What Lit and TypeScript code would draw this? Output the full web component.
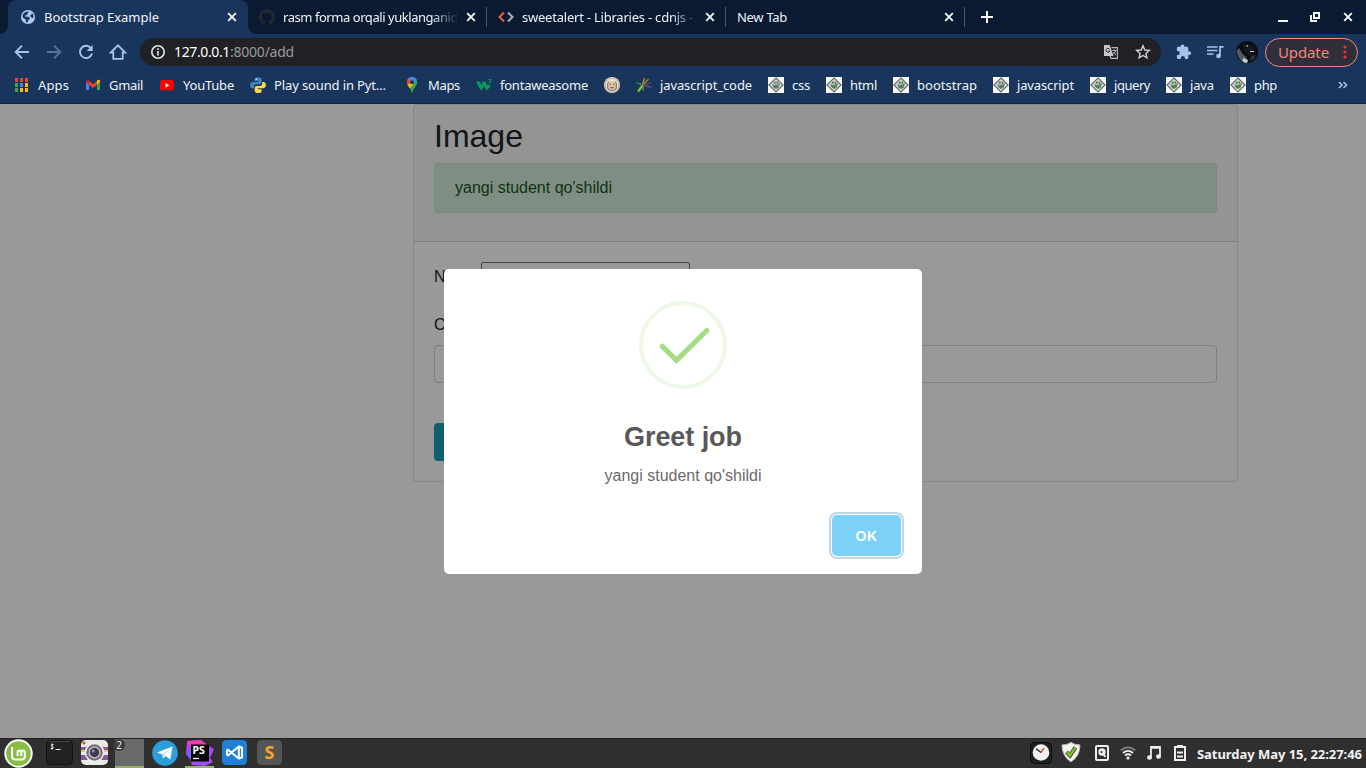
import { LitElement, html, css, svg, nothing } from "lit";
import { customElement, property } from "lit/decorators.js";

/** A single-line label whose tracking is tuned so it fills a given width. */
@customElement("fit-text")
class FitText extends LitElement {
  @property({ type: Number }) width = 0;
  @property() text = "";
  static styles = css`
    :host { display: inline-block; white-space: pre; flex: none; }
  `;
  render() {
    return html`<span>${this.text}</span>`;
  }
  updated() {
    const span = this.renderRoot.querySelector("span") as HTMLElement;
    span.style.letterSpacing = "0px";
    const natural = span.getBoundingClientRect().width;
    span.style.letterSpacing = (this.width - natural) / this.text.length + "px";
    this.style.width = this.width + "px";
  }
}

const fit = (text: string, width: number, cls = "") =>
  html`<fit-text class=${cls} .text=${text} .width=${width}></fit-text>`;

const ico = (body: unknown, w = 16, h = 16, box = `0 0 ${w} ${h}`) =>
  html`<svg class="ico" width=${w} height=${h} viewBox=${box} fill="none">${body}</svg>`;

const globe = svg`<circle cx="8" cy="8" r="7.100" fill="#b3c8ea"/><path d="M2.600 6.500C3 4.500 5 2.600 8 2.500L8.800 3.300L7.500 4.500V5.800L5.500 6.300L5.300 7.700H8.500L9.800 9L9.700 10.300L8 11.300L7.800 13.600L6 13.300L5.700 10.600L2.500 8.300ZM11.800 3.800Q13.700 5.500 13.700 8.300L12.500 9L11 8.200L10 6.500L11.800 5.300Z" fill="#1a355c"/>`;
const github = svg`<path fill="#24292e" d="M8 0C3.580 0 0 3.580 0 8c0 3.540 2.290 6.530 5.470 7.590.4.070.550-.170.550-.380v-1.490c-2.010.370-2.530-.490-2.690-.940-.090-.230-.480-.940-.820-1.130-.280-.150-.680-.520-.010-.530.630-.010 1.080.580 1.230.820.720 1.210 1.870.870 2.330.660.070-.520.280-.870.510-1.070-1.780-.2-3.640-.890-3.640-3.950 0-.870.310-1.590.820-2.150-.080-.2-.360-1.020.080-2.120 0 0 .670-.210 2.200.820a7.600 7.600 0 0 1 4 0c1.530-1.040 2.200-.820 2.200-.820.440 1.100.160 1.920.080 2.120.510.560.820 1.270.820 2.150 0 3.070-1.870 3.750-3.650 3.950.290.250.540.730.540 1.480v2.200c0 .210.150.460.550.380A8 8 0 0 0 8 0Z"/>`;
const codeIcon = svg`<path d="M6 3.500L1.500 8L6 12.500" stroke="#e8633c" stroke-width="2"/><path d="M10 3.500L14.500 8L10 12.500" stroke="#a9b0ba" stroke-width="2"/>`;
const closeX = (s = 10) =>
  ico(svg`<path d="M1.200 1.200L8.800 8.800M8.800 1.200L1.200 8.800" stroke="#f4f7fb" stroke-width="1.900"/>`, s, s, "0 0 10 10");

const apps = svg`${[0, 1, 2].map((r) =>
  [0, 1, 2].map(
    (c) => svg`<rect x=${1 + c * 5} y=${1 + r * 5} width="3" height="4" fill=${
      [["#f04338", "#f04338", "#f04338"], ["#34a853", "#4285f4", "#fbbc04"], ["#34a853", "#fbbc04", "#fbbc04"]][r][c]
    }/>`
  )
)}`;
const gmail = svg`<path d="M1 4.500V13H4V7Z" fill="#4285f4"/><path d="M15 4.500V13H12V7Z" fill="#34a853"/><path d="M4 4L8 7.200L12 4V7.800L8 11L4 7.800Z" fill="#ea4335"/><path d="M1 5V4C1 2.500 2.700 2.300 4 3.500V7.600L1 5.300Z" fill="#c5221f"/><path d="M15 5V4C15 2.500 13.300 2.300 12 3.500V7.600L15 5.300Z" fill="#fbbc04"/>`;
const youtube = svg`<rect x="1" y="3" width="14" height="10.500" rx="2.300" fill="#f00"/><path d="M6.500 5.900L10.300 8.200L6.500 10.500Z" fill="#fff"/>`;
const python = svg`<path d="M8 .2C5 .2 4.600 1.300 4.600 2.300V4H8.400V5H2.900C1.400 5 .2 6.200.2 8.200S1.400 11.300 2.700 11.300H4V9.300C4 8 5 7.200 6.200 7.200H9.500C10.600 7.200 11.500 6.400 11.500 5.300V2.500C11.500 1 10.200.2 8 .2Z" fill="#3f86bd"/><path d="M8.200 16C11.200 16 11.600 14.900 11.600 13.900V12.200H7.800V11.200H13.200C14.700 11.200 15.900 10 15.900 8S14.700 4.900 13.500 4.900H12.200V7C12.200 8.300 11.200 9 10 9H6.800C5.700 9 4.700 9.700 4.700 10.900V13.700C4.700 15.200 6 16 8.200 16Z" fill="#ffd848"/><circle cx="6.300" cy="2.300" r=".7" fill="#fff"/>`;
const maps = svg`<path d="M8 0C4.900 0 2.800 2.400 2.800 5.200C2.800 9 6.800 10.500 7.500 15.300Q8 16.600 8.500 15.300C9.200 10.500 13.200 9 13.200 5.200C13.200 2.400 11.100 0 8 0Z" fill="#34a853"/><path d="M4 1.500C5 .5 6.300 0 8 0C10.300 0 12 1.300 12.700 2.900L8 8L4 5Z" fill="#4285f4"/><path d="M4.100 1.700C2.400 3.500 2.600 6.500 3.700 8L8 4.500Z" fill="#ea4335"/><path d="M3.600 8L8.500 4L9.600 7L6 11.300Q4.300 9.300 3.600 8Z" fill="#fbbc04"/><circle cx="8" cy="5.200" r="2" fill="#1d355b"/>`;
const w3 = svg`<path d="M0 4.500H4L5.300 8.300L6.800 4.500H9.300L11 8.500L12 7L14.500 9.300L10.800 13.700L8 9L5.500 14L3 10.500Z" fill="#059862"/><path d="M12.500 2.500H15L13.800 4L15 4.800L14.300 6L12.600 5.800" stroke="#059862"/>`;
const face = svg`<circle cx="8" cy="8" r="8" fill="#ecdcc9"/><circle cx="8" cy="8" r="6.900" stroke="#c9a98b" stroke-width=".9"/><path d="M3 8C3 1.800 13 1.800 13 8V11C11 15 5 15 3 11Z" fill="#6688a8"/><path d="M4.300 7C4.500 2.200 11.500 2.200 11.700 7L11.700 11Q8 15 4.300 11Z" fill="#f0c39e"/><path d="M5.700 7.200H7M9 7.200H10.300M6.300 10.300Q8 11.600 9.700 10.300" stroke="#674332"/><path d="M5.200 4.200Q8 2.300 10.800 4.200" stroke="#fff5e8"/>`;
const burst = svg`<path d="M6.500 8L8.500 1" stroke="#e8801f" stroke-width="1.300"/><path d="M7 8L12.500 2" stroke="#7d9c2a" stroke-width="1.300"/><path d="M7 8L.5 5.700" stroke="#2d8056" stroke-width="1.500"/><path d="M7 8L2 14.500" stroke="#7ec92b" stroke-width="2.200"/><path d="M7 8V13.500" stroke="#57a63a" stroke-width="1.400"/><path d="M7 8L15.500 10.500" stroke="#65499c" stroke-width="1.400"/><path d="M7 8L15 6" stroke="#8b3d62"/>`;
const diamond = svg`<rect width="16" height="16" fill="#f7f7f5"/><path d="M8 1L15 8L8 15L1 8Z" fill="#e3e6e3" stroke="#666966" stroke-width="1.200"/><path d="M8 3.200L12.500 7.500L8 12.700L3.500 7.500Z" fill="#b2bdb5"/><path d="M4.500 7L6.500 8.300L9 7.500L12 5.500L11 10.500L8 12.300L4.800 10Z" fill="#61906f"/><path d="M6.200 5.500H7.300M8.900 5.500H9.900" stroke="#252b28" stroke-width="1.300"/><path d="M6.500 9.800H9.500" stroke="#3f5f4b"/>`;

const bookmarks: [unknown, string, number][] = [
  [apps, "Apps", 31],
  [gmail, "Gmail", 34],
  [youtube, "YouTube", 51],
  [python, "Play sound in Pyt…", 112],
  [maps, "Maps", 32],
  [w3, "fontaweasome", 88],
  [face, "", 0],
  [burst, "javascript_code", 92],
  [diamond, "css", 18],
  [diamond, "html", 27],
  [diamond, "bootstrap", 60],
  [diamond, "javascript", 57],
  [diamond, "jquery", 36],
  [diamond, "java", 24],
  [diamond, "php", 23],
];

@customElement("browser-chrome")
class BrowserChrome extends LitElement {
  static styles = css`
    :host { display: block; height: 104px; background: #1a355c; color: #eef3fa;
      font: 13px/16px "Noto Sans", "Open Sans", sans-serif; box-sizing: border-box; border-bottom: 1px solid #10233f; }
    * { box-sizing: border-box; }
    .ico { display: block; flex: none; overflow: visible; }
    .strip { height: 34px; background: #0b1a33; display: flex; align-items: center; padding: 0 13px 0 8px; }
    .tab { width: 239px; flex: none; height: 34px; display: flex; align-items: center; gap: 8px; padding: 0 11px 0 11px; position: relative; }
    .tab.active { width: 240px; background: #1a355c; border-radius: 8px 8px 0 0; padding-left: 12px; }
    .tab.active::before, .tab.active::after { content: ""; position: absolute; bottom: 0; width: 8px; height: 8px; }
    .tab.active::before { left: -8px; background: radial-gradient(circle at 0 0, #0b1a33 7.5px, #1a355c 8px); }
    .tab.active::after { right: -8px; background: radial-gradient(circle at 100% 0, #0b1a33 7.5px, #1a355c 8px); }
    .tab.line::after { content: ""; position: absolute; right: 0; top: 7px; width: 1px; height: 20px; background: #4a5567; }
    .title { flex: 1; white-space: nowrap; height: 18px; line-height: 18px; }
    .title.fade { -webkit-mask: linear-gradient(90deg, #000 calc(100% - 26px), transparent 100%); }
    .plus { margin-left: 16px; }
    .win { margin-left: auto; display: flex; gap: 22px; align-items: center; }
    .bar { height: 36px; display: flex; align-items: center; padding: 0 0 0 14px; }
    .nav { display: flex; flex: none; gap: 16px; width: 126px; }
    .omni { width: 1021px; flex: none; height: 28px; border-radius: 14px; background: #202124; display: flex; align-items: center;
      padding: 0 10px; font-size: 14px; line-height: 20px; color: #9a9b9d; }
    .host { color: #fff; margin-left: 8px; }
    .right { margin-left: auto; display: flex; gap: 16px; }
    .tools { display: flex; flex: none; align-items: center; gap: 15px; margin-left: 14px; }
    .avatar { margin: 0 -8px 0 -3px; }
    .update { width: 93px; height: 29px; border: 1px solid #f28b82; border-radius: 15px; background: #302e3a; color: #f5857c;
      font-size: 15px; line-height: 20px; display: flex; align-items: center; padding: 0 10px 1px 12px; justify-content: space-between; }
    .marks { height: 30px; display: flex; align-items: center; gap: 16px; padding: 0 18px 0 14px; }
    .mark { display: flex; flex: none; gap: 8px; align-items: center; height: 18px; line-height: 18px; }
    .mark.trim { margin-right: 2px; }
    .more { margin-left: auto; }
  `;
  render() {
    return html`
      <div class="strip">
        <div class="tab active">${ico(globe)}<div class="title">${fit("Bootstrap Example", 115)}</div>${closeX()}</div>
        <div class="tab line">${ico(github)}<div class="title fade">${fit("rasm forma orqali yuklanganid", 175)}</div>${closeX()}</div>
        <div class="tab line">${ico(codeIcon)}<div class="title fade">${fit("sweetalert - Libraries - cdnjs -", 171)}</div>${closeX()}</div>
        <div class="tab line"><div class="title">${fit("New Tab", 50)}</div>${closeX()}</div>
        <div class="plus">${ico(svg`<path d="M6 0V12M0 6H12" stroke="#fff" stroke-width="2"/>`, 12, 12)}</div>
        <div class="win">
          ${ico(svg`<path d="M-1 9H9" stroke="#f4f7fb" stroke-width="2"/>`, 10, 10)}
          ${ico(svg`<path d="M3 1H8V6H3ZM0 3V9H6" stroke="#f4f7fb" stroke-width="2"/>`, 10, 10)}
          ${closeX()}
        </div>
      </div>
      <div class="bar">
        <div class="nav">
          ${ico(svg`<path d="M15 8H2M8 1.700L1.700 8L8 14.300" stroke="#a9c2e9" stroke-width="1.900"/>`)}
          ${ico(svg`<path d="M1 8H14M8 1.700L14.300 8L8 14.300" stroke="#58739d" stroke-width="1.900"/>`)}
          ${ico(svg`<path d="M13.200 4.500A6.100 6.100 0 1 0 14 9.500" stroke="#a9c2e9" stroke-width="1.900"/><path d="M14.700 1V7H8.700Z" fill="#a9c2e9"/>`)}
          ${ico(svg`<path d="M.8 8.500L8 1.300L15.200 8.500H12.700V14.800H3.300V8.500Z" stroke="#a9c2e9" stroke-width="1.800"/>`)}
        </div>
        <div class="omni">
          ${ico(svg`<circle cx="8" cy="8" r="6.200" stroke="#e3e6ea" stroke-width="1.600"/><path d="M8 7V11.500M8 4.300V6" stroke="#e3e6ea" stroke-width="1.600"/>`)}
          ${fit("127.0.0.1", 56, "host")}${fit(":8000/add", 64)}
          <div class="right">
            ${ico(svg`<path d="M1 1H6.700L10.500 12H1Z" fill="#c5c7ca"/><path d="M8.500 3.600H14.400V14.400H8L7 12" stroke="#b8babd" stroke-width="1.100"/><path d="M6.500 5A2 2 0 1 0 6.900 7H5" stroke="#303236"/><path d="M9.300 6.500H13.500M11.300 5.500V6.500M12.800 6.700Q12 9 10 10.500M10.300 8L13 11" stroke="#b8babd"/>`)}
            ${ico(svg`<path d="M8 1.800L9.800 6L14.300 6.400L10.900 9.400L11.900 13.800L8 11.500L4.100 13.800L5.100 9.400L1.700 6.400L6.200 6Z" stroke="#d0d3d7" stroke-width="1.400"/>`)}
          </div>
        </div>
        <div class="tools">
          ${ico(svg`<path d="M14.200 7.200H13.300V4.300C13.300 3.400 12.700 2.800 11.900 2.800H9.400V2.300A1.900 1.900 0 0 0 5.600 2.300V2.800H3.200C2.400 2.800 1.900 3.400 1.900 4.200V6.900H2.800A2 2 0 0 1 2.800 10.900H1.900V13.600C1.900 14.400 2.400 15 3.200 15H5.900V14.100A2 2 0 0 1 9.900 14.100V15H12C12.800 15 13.300 14.400 13.300 13.600V11H14.200A1.900 1.900 0 0 0 14.200 7.200Z" fill="#a9c2e9"/>`)}
          ${ico(svg`<path d="M1 3H11.500M1 6.500H11.500M1 10H7.500" stroke="#a9c2e9" stroke-width="1.600"/><path d="M14 12V2.900H17.500" stroke="#a9c2e9" stroke-width="1.700"/><circle cx="12.500" cy="12" r="2.300" fill="#a9c2e9"/>`, 18, 16)}
          <div class="avatar">${ico(svg`<circle cx="11" cy="11" r="11" fill="#0b0d10"/><path d="M7 3L18 5L20 12L14 15L8 11Z" fill="#15181c"/><path d="M10 4.500L12 4L11.500 6ZM14 10H18V11H14Z" fill="#c2ccd3"/><path d="M.5 10L3 7L6 12L11 17L8 21.500Q2 19 .5 10Z" fill="#4c5a66"/><path d="M7 17L12 19L11 22Q8 22 6.500 20Z" fill="#c8d0d6"/><path d="M15 15L19.500 14L18 18L14 20Z" fill="#2c3740"/>`, 22, 22)}</div>
          <div class="update">${fit("Update", 51)}${ico(svg`<circle cx="2" cy="2" r="1.600" fill="#ee3527"/><circle cx="2" cy="7" r="1.600" fill="#ee3527"/><circle cx="2" cy="12" r="1.600" fill="#ee3527"/>`, 4, 14)}</div>
        </div>
      </div>
      <div class="marks">
        ${bookmarks.map(([i, t, w]) => html`<div class="mark ${i === python ? "trim" : ""}">${ico(i)}${t ? fit(t, w) : nothing}</div>`)}
        <div class="more">${ico(svg`<path d="M1 1L4 4L1 7M5.500 1L8.500 4L5.500 7" stroke="#a9c2e9" stroke-width="1.600"/>`, 10, 8)}</div>
      </div>`;
  }
}

@customElement("student-page")
class StudentPage extends LitElement {
  static styles = css`
    :host { display: block; height: 634px; background: #fff; color: #212529; position: relative; overflow: hidden;
      font: 16px/24px "Liberation Sans", Arial, sans-serif; }
    * { box-sizing: border-box; }
    .card { width: 825px; height: 378px; margin-left: 413px; border: 1px solid rgba(0,0,0,.125); border-radius: 4px; }
    .head { background: rgba(0,0,0,.03); border-bottom: 1px solid rgba(0,0,0,.125); padding: 12px 20px; height: 137px; }
    h2 { font-size: 32px; line-height: 38.400px; font-weight: 500; margin: 0 0 8px; }
    .alert { height: 50px; padding: 12px 20px; border: 1px solid #c3e6cb; border-radius: 4px; background: #d4edda; color: #155724; }
    .body { padding: 20px; }
    .row { display: flex; align-items: center; gap: 4px; height: 30px; }
    .row span { width: 43px; }
    .plain { width: 209px; height: 30px; border: 1px solid #767676; border-radius: 2px; }
    .label { margin-top: 21px; }
    .field { margin-top: 8px; height: 38px; border: 1px solid #ced4da; border-radius: 4px; }
    .send { margin-top: 40px; width: 76px; height: 38px; background: #17a2b8; border-radius: 4px; }
    .shade { position: absolute; inset: 0; background: rgba(0,0,0,.4); }
    .modal { position: absolute; left: 444px; top: 165px; width: 478px; height: 305px; background: #fff; border-radius: 5px;
      display: flex; flex-direction: column; align-items: center; padding: 32px 21px 18px; }
    .tick { display: block; }
    .h { font-size: 27px; line-height: 32px; font-weight: 700; color: #595959; margin-top: 32px; }
    .p { color: #6b6b6b; line-height: 20px; margin-top: 13px; }
    .ok { align-self: flex-end; margin-top: auto; width: 69px; height: 41px; border-radius: 5px; background: #7cd1f9; color: #fff;
      font-size: 14px; font-weight: 700; display: grid; place-items: center; box-shadow: 0 0 0 1px #fff, 0 0 0 3px rgba(43,114,165,.29); }
  `;
  render() {
    return html`
      <div class="card">
        <div class="head"><h2>Image</h2><div class="alert">yangi student qo'shildi</div></div>
        <div class="body">
          <div class="row"><span>Name</span><div class="plain"></div></div>
          <div class="label">Class</div>
          <div class="field"></div>
          <div class="send"></div>
        </div>
      </div>
      <div class="shade"></div>
      <div class="modal">
        <svg class="tick" width="88" height="88" viewBox="0 0 88 88" fill="none">
          <circle cx="44" cy="44" r="42" stroke="#edf8e7" stroke-width="4" />
          <path d="M23.300 45.300L37.500 59.300L67.800 29.500" stroke="#a5dc86" stroke-width="5.200" stroke-linecap="round" />
        </svg>
        ${fit("Greet job", 118, "h")}
        ${fit("yangi student qo'shildi", 157, "p")}
        <div class="ok">${fit("OK", 22)}</div>
      </div>`;
  }
}

@customElement("task-bar")
class TaskBar extends LitElement {
  static styles = css`
    :host { display: flex; height: 30px; box-sizing: border-box; background: #2f2f2f; border-top: 1px solid #222; align-items: center;
      color: #f2f2f2; font: 700 13px/18px "Noto Sans", "Open Sans", sans-serif; padding: 0 4px; }
    .ico { display: block; flex: none; }
    .left { display: flex; }
    .cell { width: 29px; height: 29px; margin-right: 6px; padding-bottom: 2px; display: grid; place-items: center; box-sizing: border-box; position: relative; }
    .cell.menu { margin-right: 12px; padding-bottom: 0; }
    .cell.open { border-bottom: 2px solid #93b470; padding-bottom: 0; }
    .blank { background: #6a6a6a; }
    .badge { position: absolute; left: -2px; top: 0; width: 12px; height: 12px; border-radius: 6px; background: #3c3c3c; font-size: 10px; line-height: 12px; font-weight: 400; text-align: center; }
    .tray { margin-left: auto; display: flex; align-items: center; }
    .slot { width: 26px; display: grid; place-items: center; padding-bottom: 2px; }
    .slot.clock { width: 25px; }
    .slot.shield { width: 35px; }
    .slot.disk { width: 27px; }
    .time { margin-left: 4px; }
  `;
  render() {
    return html`
      <div class="left">
        <div class="cell menu">${ico(svg`<circle cx="14.500" cy="14.500" r="14.200" fill="#fff"/><circle cx="14.500" cy="14.500" r="12.300" fill="#86bd42"/><path d="M8.100 8V17.200Q8.100 20.500 11.400 20.500H17.800Q20.800 20.500 20.800 17.500V13.500Q20.800 11.500 19 11.500T17.200 13.300V17M17.200 13.500Q17.200 11.500 15.400 11.500T13.600 13.300V17" stroke="#fff" stroke-width="2.100"/>`, 29, 29)}</div>
        <div class="cell">${ico(svg`<rect x=".5" y=".5" width="26" height="24" rx="4" fill="#202224" stroke="#111"/><path d="M3 1.500H24" stroke="#484a4b"/><path d="M7.600 4.500H5.700Q4.300 6 6.500 6.500Q8.300 7.200 7 8.600H4.500M6.200 3.300V9.700" stroke="#eee" stroke-width=".9"/><path d="M9.500 9.500H14.500" stroke="#eee"/>`, 27, 25)}</div>
        <div class="cell">${ico(svg`<rect width="27" height="25" rx="5" fill="#ece9e4"/><path d="M0 7H27V10H0ZM0 15H27V20H0Z" fill="#815aa0"/><path d="M0 10H27V12H0Z" fill="#e6c56d"/><circle cx="13.500" cy="12.500" r="9.800" fill="#f2f0ed"/><circle cx="13.500" cy="12.500" r="8.300" fill="#77717d"/><circle cx="13.500" cy="12.500" r="6" fill="#c7c0cf"/><circle cx="13.500" cy="12.500" r="4.700" fill="#45364e"/><circle cx="12.300" cy="11" r="1.500" fill="#a790b6"/><circle cx="3" cy="3" r="1.500" fill="#e34b3d"/>`, 27, 25)}</div>
        <div class="cell blank open"><div class="badge">2</div></div>
        <div class="cell">${ico(svg`<circle cx="13" cy="13" r="12.800" fill="#2a9fda"/><path d="M5 12.500L20.500 6.500L18.300 19.500L13.500 16L11 18.500L10.500 14.500Z" fill="#fff"/><path d="M10.500 14.500L18 8.500L12 15.200L11 18.500Z" fill="#b5d9ef"/>`, 26, 26)}</div>
        <div class="cell open">${ico(svg`<path d="M1 1L15 0L21 5L28 9L24 18L27 22L19 26L6 25L4 18L0 14Z" fill="#a24df5"/><path d="M1 1L15 0L23 6L17 11L4 8Z" fill="#ef3caf"/><path d="M0 14L5 9L7 21L4 19Z" fill="#7c5df5"/><rect x="5" y="4.500" width="18" height="17" fill="#080808"/><path d="M7 18.500H13" stroke="#fff" stroke-width="1.300"/><text x="6.500" y="13.500" font-size="10.500" fill="#fff">PS</text>`, 28, 26)}</div>
        <div class="cell">${ico(svg`<rect width="25" height="25" rx="4.500" fill="#1f80d8"/><path d="M16.800 6.500L20 7.800V17.200L16.800 18.500L6 9.700L5 10.400V14.800L6 15.500Z" stroke="#fff" stroke-width="2.100" stroke-linejoin="round"/><path d="M16.800 6.500V18.500" stroke="#fff" stroke-width="2"/>`, 25, 25)}</div>
        <div class="cell">${ico(svg`<rect width="25" height="25" rx="4.500" fill="#555"/><text x="12.500" y="19" font-size="18" text-anchor="middle" fill="#f9a32c">S</text>`, 25, 25)}</div>
      </div>
      <div class="tray">
        <div class="slot clock">${ico(svg`<rect x=".5" y=".5" width="21" height="21" rx="4" fill="#202020" stroke="#0d0d0d"/><circle cx="11" cy="10.500" r="8.300" fill="#f2f2f2"/><path d="M6 6.800L11 10.500" stroke="#222" stroke-width="1.400"/><path d="M10.500 11L14 6" stroke="#d92d2a" stroke-width="1.300"/>`, 22, 22)}</div>
        <div class="slot shield">${ico(svg`<path d="M10 .5Q14 3 19 3Q19 14 10 20Q1 14 1 3Q6 3 10 .5Z" fill="#f5f5f5" stroke="#b9b9b9"/><path d="M5.500 10L9 13.500L14.500 5.500" stroke="#345d19" stroke-width="4.200"/><path d="M5.700 10L9 13.300L14.300 5.700" stroke="#86b53c" stroke-width="2.500"/>`, 20, 21)}</div>
        <div class="slot disk">${ico(svg`<rect x="2" y="1" width="12" height="14" rx="1" stroke="#eee" stroke-width="2"/><circle cx="8" cy="7" r="3.700" fill="#eee"/><circle cx="7.500" cy="7" r="1.100" fill="#333"/><path d="M8.500 8L11.500 12" stroke="#eee" stroke-width="2"/>`, 16, 16)}</div>
        <div class="slot">${ico(svg`<path d="M.8 5.500Q8 -.8 15.200 5.500" stroke="#777" stroke-width="2"/><path d="M3 8Q8 3.700 13 8M5 10.500Q8 8 11 10.500" stroke="#eee" stroke-width="1.800"/><circle cx="8" cy="13" r="1.600" fill="#eee"/>`, 16, 16)}</div>
        <div class="slot">${ico(svg`<path d="M5 12V2H14V11" stroke="#eee" stroke-width="1.800"/><path d="M5 2.500H14" stroke="#eee" stroke-width="2.500"/><ellipse cx="3.500" cy="12.500" rx="2.500" ry="2.200" fill="#eee"/><ellipse cx="12.500" cy="11.500" rx="2.500" ry="2.200" fill="#eee"/>`, 16, 16)}</div>
        <div class="slot">${ico(svg`<path d="M3 3H13V16H3Z" stroke="#eee" stroke-width="2"/><path d="M5 1H11V3H5Z" fill="#eee"/><path d="M5 8.500H11M5 12.500H11" stroke="#eee" stroke-width="2"/>`, 16, 18)}</div>
        <div class="time">${fit("Saturday May 15, 22:27:46", 165)}</div>
      </div>`;
  }
}

@customElement("app-root")
class AppRoot extends LitElement {
  static styles = css`
    :host { display: flex; flex-direction: column; width: 1366px; height: 768px; overflow: hidden; }
  `;
  render() {
    return html`<browser-chrome></browser-chrome><student-page></student-page><task-bar></task-bar>`;
  }
}
